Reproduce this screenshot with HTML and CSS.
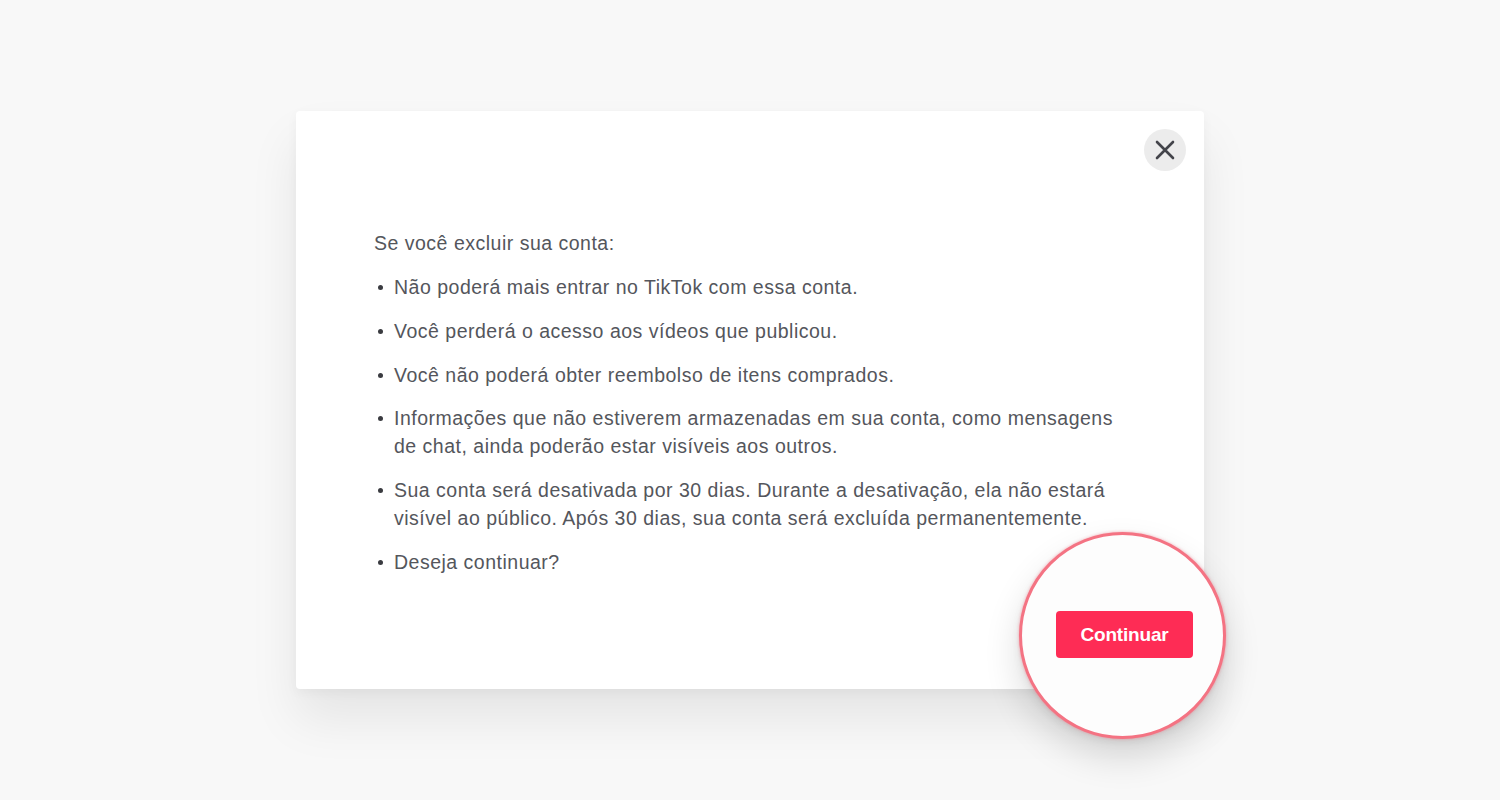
FILE: index.html
```html
<!DOCTYPE html>
<html lang="pt">
<head>
<meta charset="utf-8">
<link rel="stylesheet" href="styles.css">
</head>
<body>
<div class="modal">
  <div class="modal-head">
    <button class="close" aria-label="Fechar">
      <svg width="22" height="22" viewBox="0 0 22 22"><path d="M3 3L19 19M19 3L3 19" stroke="#43444a" stroke-width="2.6" stroke-linecap="round"/></svg>
    </button>
  </div>
  <div class="modal-body">
    <p class="lead">Se você excluir sua conta:</p>
    <ul class="list">
      <li>Não poderá mais entrar no TikTok com essa conta.</li>
      <li>Você perderá o acesso aos vídeos que publicou.</li>
      <li>Você não poderá obter reembolso de itens comprados.</li>
      <li>Informações que não estiverem armazenadas em sua conta, como mensagens de chat, ainda poderão estar visíveis aos outros.</li>
      <li>Sua conta será desativada por 30 dias. Durante a desativação, ela não estará visível ao público. Após 30 dias, sua conta será excluída permanentemente.</li>
      <li>Deseja continuar?</li>
    </ul>
  </div>
  <div class="modal-foot">
    <button class="primary">Continuar</button>
  </div>
  <div class="magnifier"></div>
</div>
</body>
</html>
```
FILE: styles.css
```css
html, body { margin: 0; padding: 0; }
body {
  width: 1500px;
  height: 800px;
  background: #f8f8f8;
  display: flex;
  align-items: center;
  justify-content: center;
  font-family: "Liberation Sans", Arial, sans-serif;
  overflow: hidden;
}
.modal {
  position: relative;
  width: 908px;
  height: 578px;
  background: #fff;
  border-radius: 4px;
  box-shadow: 0 30px 50px rgba(0,0,0,0.08), 0 4px 12px rgba(0,0,0,0.04);
  box-sizing: border-box;
  display: flex;
  flex-direction: column;
}
.modal-head {
  display: flex;
  justify-content: flex-end;
  padding: 18px 18px 0 0;
}
.close {
  width: 42px;
  height: 42px;
  border-radius: 50%;
  border: none;
  background: #ececec;
  display: flex;
  align-items: center;
  justify-content: center;
  padding: 0;
}
.modal-body {
  padding: 58px 78px 0 78px;
  color: #54565c;
  font-size: 19.5px;
  line-height: 28px;
  letter-spacing: 0.5px;
}
.lead { margin: 0 0 16px 0; }
.list {
  margin: 0;
  padding: 0;
  list-style: none;
  width: 756px;
}
.list li {
  position: relative;
  padding-left: 20px;
  margin-bottom: 15.8px;
}
.list li::before {
  content: "";
  position: absolute;
  left: 4px;
  top: 12px;
  width: 5px;
  height: 5px;
  border-radius: 50%;
  background: #3a3b40;
}
.modal-foot {
  margin-top: auto;
  display: flex;
  justify-content: flex-end;
  padding: 0 11px 31px 0;
}
.primary {
  position: relative;
  z-index: 2;
  width: 137px;
  height: 47px;
  border: none;
  border-radius: 4px;
  background: #fe2c55;
  color: #fff;
  font-family: "Liberation Sans", Arial, sans-serif;
  font-weight: 700;
  font-size: 19px;
  letter-spacing: -0.2px;
  padding: 0;
}
.magnifier {
  position: absolute;
  left: 723px;
  top: 421px;
  width: 201px;
  height: 201px;
  border-radius: 50%;
  background: #fdfdfd;
  border: 3px solid #f47383;
  box-shadow: 0 0 3px rgba(244,115,131,0.6), 0 18px 36px rgba(0,0,0,0.14), 0 4px 10px rgba(0,0,0,0.06);
  z-index: 1;
}
```
